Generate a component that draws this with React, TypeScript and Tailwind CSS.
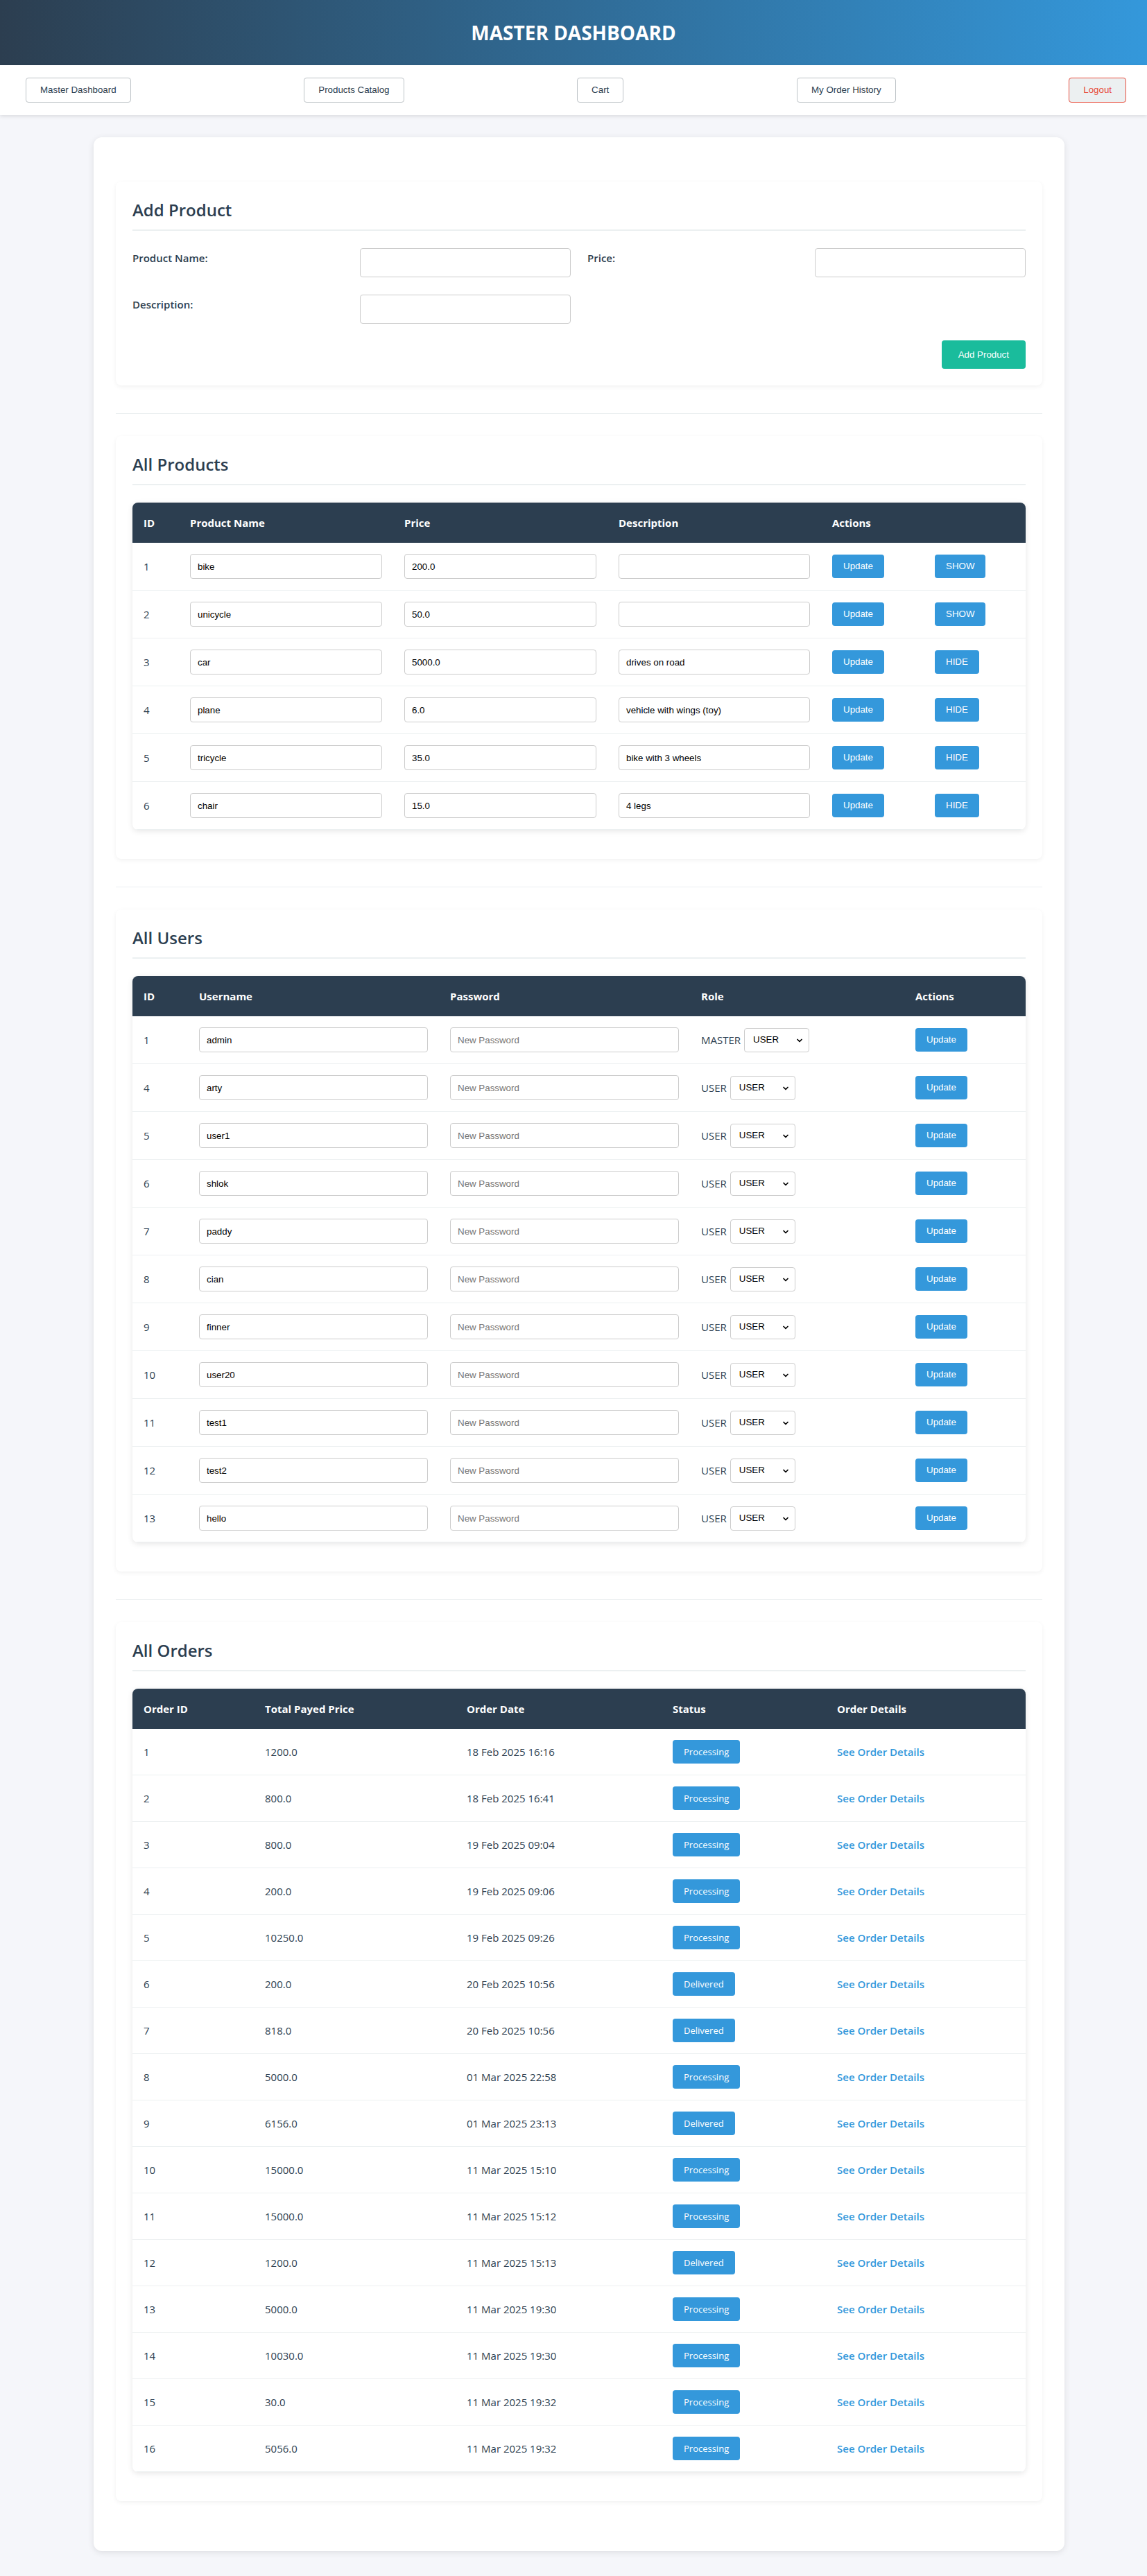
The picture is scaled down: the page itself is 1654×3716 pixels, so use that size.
import React from 'react';
import { ChevronDown } from 'lucide-react';

const products = [
  { id: 1, name: 'bike', price: '200.0', desc: '', vis: 'SHOW' },
  { id: 2, name: 'unicycle', price: '50.0', desc: '', vis: 'SHOW' },
  { id: 3, name: 'car', price: '5000.0', desc: 'drives on road', vis: 'HIDE' },
  { id: 4, name: 'plane', price: '6.0', desc: 'vehicle with wings (toy)', vis: 'HIDE' },
  { id: 5, name: 'tricycle', price: '35.0', desc: 'bike with 3 wheels', vis: 'HIDE' },
  { id: 6, name: 'chair', price: '15.0', desc: '4 legs', vis: 'HIDE' },
];

const users = [
  { id: 1, name: 'admin', role: 'MASTER' },
  { id: 4, name: 'arty', role: 'USER' },
  { id: 5, name: 'user1', role: 'USER' },
  { id: 6, name: 'shlok', role: 'USER' },
  { id: 7, name: 'paddy', role: 'USER' },
  { id: 8, name: 'cian', role: 'USER' },
  { id: 9, name: 'finner', role: 'USER' },
  { id: 10, name: 'user20', role: 'USER' },
  { id: 11, name: 'test1', role: 'USER' },
  { id: 12, name: 'test2', role: 'USER' },
  { id: 13, name: 'hello', role: 'USER' },
];

const orders = [
  [1, '1200.0', '18 Feb 2025 16:16', 'Processing'],
  [2, '800.0', '18 Feb 2025 16:41', 'Processing'],
  [3, '800.0', '19 Feb 2025 09:04', 'Processing'],
  [4, '200.0', '19 Feb 2025 09:06', 'Processing'],
  [5, '10250.0', '19 Feb 2025 09:26', 'Processing'],
  [6, '200.0', '20 Feb 2025 10:56', 'Delivered'],
  [7, '818.0', '20 Feb 2025 10:56', 'Delivered'],
  [8, '5000.0', '01 Mar 2025 22:58', 'Processing'],
  [9, '6156.0', '01 Mar 2025 23:13', 'Delivered'],
  [10, '15000.0', '11 Mar 2025 15:10', 'Processing'],
  [11, '15000.0', '11 Mar 2025 15:12', 'Processing'],
  [12, '1200.0', '11 Mar 2025 15:13', 'Delivered'],
  [13, '5000.0', '11 Mar 2025 19:30', 'Processing'],
  [14, '10030.0', '11 Mar 2025 19:30', 'Processing'],
  [15, '30.0', '11 Mar 2025 19:32', 'Processing'],
  [16, '5056.0', '11 Mar 2025 19:32', 'Processing'],
];

const inputCls =
  "w-full h-9 rounded border border-[#cccccc] bg-white px-[10px] font-['Liberation_Sans',sans-serif] text-[13.33px] text-black placeholder:text-[#757575] outline-none";
const blueBtn =
  "h-[34px] px-4 rounded bg-[#3498db] font-['Liberation_Sans',sans-serif] text-[13.33px] text-white";
const th = 'h-[58px] px-4 text-left text-[15px] font-bold text-white';
const td = 'px-4 py-4 border-b border-[#ecf0f1] align-middle';

const Section = ({ title, children }: { title: string; children: React.ReactNode }) => (
  <section className="mt-8 mb-10 rounded-lg bg-white p-6 shadow-[0_2px_6px_rgba(0,0,0,0.06)]">
    <h2 className="mb-[25px] border-b-2 border-[#ecf0f1] pb-3 text-[24px] leading-[33px] font-semibold text-[#2c3e50]">
      {title}
    </h2>
    {children}
  </section>
);

const TableBox = ({ children }: { children: React.ReactNode }) => (
  <div className="mb-[18px] overflow-hidden rounded-lg bg-white shadow-[0_2px_8px_rgba(0,0,0,0.1)]">
    <table className="w-full table-fixed border-collapse">{children}</table>
  </div>
);

const App = () => {
  const navItems = ['Master Dashboard', 'Products Catalog', 'Cart', 'My Order History'];

  return (
    <div className="min-h-screen bg-[#f5f6fa] font-['Open_Sans',sans-serif] text-[15px] text-[#2c3e50]">
      {/* Header */}
      <header className="flex h-[94px] items-center justify-center bg-[linear-gradient(to_right,#2c3e50,#3498db)]">
        <h1 className="text-[28px] font-bold text-white">MASTER DASHBOARD</h1>
      </header>

      {/* Nav */}
      <nav className="flex h-[72px] items-center justify-between bg-white pl-[37px] pr-[30px] shadow-[0_2px_5px_rgba(0,0,0,0.1)]">
        {navItems.map((n) => (
          <button
            key={n}
            className="h-9 rounded border border-[#bdc3c7] bg-white px-5 font-['Liberation_Sans',sans-serif] text-[13.33px] text-[#2c3e50]"
          >
            {n}
          </button>
        ))}
        <button className="h-9 rounded border border-[#e74c3c] bg-[#ecf0f1] px-5 font-['Liberation_Sans',sans-serif] text-[13.33px] text-[#e74c3c]">
          Logout
        </button>
      </nav>

      <div className="pl-4">
        <main className="mx-auto my-8 max-w-[1400px] rounded-xl bg-white p-8 shadow-[0_2px_10px_rgba(0,0,0,0.1)]">
          {/* Add Product */}
          <Section title="Add Product">
            <div className="grid grid-cols-4 gap-x-6 gap-y-[25px]">
              <label className="pt-[3px] text-[15px] font-semibold">Product Name:</label>
              <input className={inputCls + ' h-[42px]'} />
              <label className="pt-[3px] text-[15px] font-semibold">Price:</label>
              <input className={inputCls + ' h-[42px]'} />
              <label className="pt-[3px] text-[15px] font-semibold">Description:</label>
              <input className={inputCls + ' h-[42px]'} />
            </div>
            <div className="mt-6 flex justify-end">
              <button className="h-[41px] rounded bg-[#1abc9c] px-6 font-['Liberation_Sans',sans-serif] text-[13.33px] text-white">
                Add Product
              </button>
            </div>
          </Section>

          <hr className="border-[#ecf0f1]" />

          {/* All Products */}
          <Section title="All Products">
            <TableBox>
              <colgroup>
                <col className="w-[67px]" />
                <col className="w-[309px]" />
                <col className="w-[309px]" />
                <col className="w-[308px]" />
                <col className="w-[148px]" />
                <col className="w-[147px]" />
              </colgroup>
              <thead className="bg-[#2c3e50]">
                <tr>
                  <th className={th}>ID</th>
                  <th className={th}>Product Name</th>
                  <th className={th}>Price</th>
                  <th className={th}>Description</th>
                  <th className={th}>Actions</th>
                  <th className={th}></th>
                </tr>
              </thead>
              <tbody>
                {products.map((p) => (
                  <tr key={p.id}>
                    <td className={td}>{p.id}</td>
                    <td className={td}>
                      <input className={inputCls} defaultValue={p.name} />
                    </td>
                    <td className={td}>
                      <input className={inputCls} defaultValue={p.price} />
                    </td>
                    <td className={td}>
                      <input className={inputCls} defaultValue={p.desc} />
                    </td>
                    <td className={td}>
                      <button className={blueBtn}>Update</button>
                    </td>
                    <td className={td}>
                      <button className={blueBtn}>{p.vis}</button>
                    </td>
                  </tr>
                ))}
              </tbody>
            </TableBox>
          </Section>

          <hr className="border-[#ecf0f1]" />

          {/* All Users */}
          <Section title="All Users">
            <TableBox>
              <colgroup>
                <col className="w-[80px]" />
                <col className="w-[362px]" />
                <col className="w-[362px]" />
                <col className="w-[309px]" />
                <col className="w-[175px]" />
              </colgroup>
              <thead className="bg-[#2c3e50]">
                <tr>
                  <th className={th}>ID</th>
                  <th className={th}>Username</th>
                  <th className={th}>Password</th>
                  <th className={th}>Role</th>
                  <th className={th}>Actions</th>
                </tr>
              </thead>
              <tbody>
                {users.map((u) => (
                  <tr key={u.id}>
                    <td className={td}>{u.id}</td>
                    <td className={td}>
                      <input className={inputCls} defaultValue={u.name} />
                    </td>
                    <td className={td}>
                      <input className={inputCls} type="password" placeholder="New Password" />
                    </td>
                    <td className={td}>
                      <div className="flex items-center gap-[5px]">
                        <span>{u.role}</span>
                        <div className="relative">
                          <select className="h-[35px] w-[94px] appearance-none rounded border border-[#cccccc] bg-white pl-3 font-['Liberation_Sans',sans-serif] text-[13.33px] text-black">
                            <option>USER</option>
                            <option>MASTER</option>
                          </select>
                          <ChevronDown
                            className="pointer-events-none absolute right-[8px] top-[12px] h-3 w-3 text-black"
                            strokeWidth={3.5}
                          />
                        </div>
                      </div>
                    </td>
                    <td className={td}>
                      <button className={blueBtn}>Update</button>
                    </td>
                  </tr>
                ))}
              </tbody>
            </TableBox>
          </Section>

          <hr className="border-[#ecf0f1]" />

          {/* All Orders */}
          <Section title="All Orders">
            <TableBox>
              <colgroup>
                <col className="w-[175px]" />
                <col className="w-[291px]" />
                <col className="w-[297px]" />
                <col className="w-[237px]" />
                <col className="w-[288px]" />
              </colgroup>
              <thead className="bg-[#2c3e50]">
                <tr>
                  <th className={th}>Order ID</th>
                  <th className={th}>Total Payed Price</th>
                  <th className={th}>Order Date</th>
                  <th className={th}>Status</th>
                  <th className={th}>Order Details</th>
                </tr>
              </thead>
              <tbody>
                {orders.map(([id, total, date, status]) => (
                  <tr key={id}>
                    <td className={td}>{id}</td>
                    <td className={td}>{total}</td>
                    <td className={td}>{date}</td>
                    <td className={td}>
                      <span className="inline-block rounded bg-[#3498db] px-4 py-2 text-[13px] leading-[18px] text-white">
                        {status}
                      </span>
                    </td>
                    <td className={td}>
                      <a href="#" className="font-semibold text-[#3498db]">
                        See Order Details
                      </a>
                    </td>
                  </tr>
                ))}
              </tbody>
            </TableBox>
          </Section>
        </main>
      </div>
    </div>
  );
};

export default App;
